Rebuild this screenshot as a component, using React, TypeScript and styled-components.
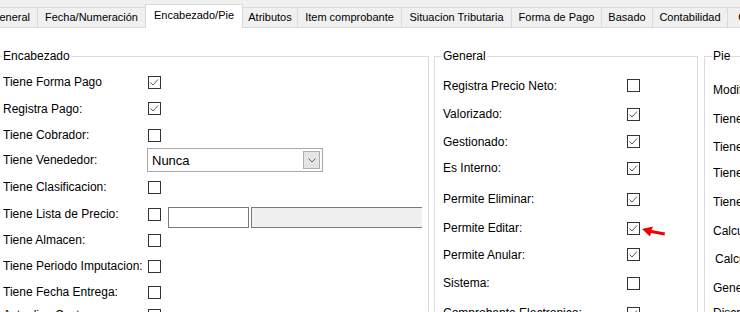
import React from "react";
import styled, { createGlobalStyle } from "styled-components";

const Global = createGlobalStyle`
  html, body { margin: 0; padding: 0; overflow: hidden; background: #fff; }
  body { font-family: "Liberation Sans", Arial, sans-serif; color: #000; }
`;

const Window = styled.div`
  width: 740px;
  height: 312px;
  overflow: hidden;
  background: #fff;
`;

const TabStrip = styled.div`
  height: 28px;
  background: #f0f0f0;
  overflow: hidden;
`;

const TabList = styled.div`
  display: flex;
  align-items: flex-end;
  height: 28px;
  margin-left: -16px;
`;

const Tab = styled.div<{ $w: number; $active?: boolean }>`
  flex: none;
  box-sizing: border-box;
  width: ${(p) => p.$w}px;
  height: ${(p) => (p.$active ? 24 : 21)}px;
  margin-left: -1px;
  border: 1px solid #d9d9d9;
  border-bottom: ${(p) => (p.$active ? "none" : "1px solid #d9d9d9")};
  background: ${(p) => (p.$active ? "#fff" : "#f0f0f0")};
  position: relative;
  z-index: ${(p) => (p.$active ? 1 : 0)};
  font-size: 11px;
  line-height: ${(p) => (p.$active ? 21 : 19)}px;
  text-align: center;
  white-space: nowrap;
  color: #000;
`;

const Content = styled.div`
  display: flex;
  align-items: flex-start;
  padding-top: 21px;
`;

const Group = styled.fieldset<{ $w: number; $ml: number; $pr: number }>`
  flex: none;
  box-sizing: border-box;
  width: ${(p) => p.$w}px;
  height: 330px;
  margin: 0 0 0 ${(p) => p.$ml}px;
  padding: 0 ${(p) => p.$pr}px 0 8px;
  border: 1px solid #dcdcdc;
  min-width: 0;
`;

const Legend = styled.legend`
  margin-left: -1px;
  padding: 0 1px;
  font-size: 12px;
  line-height: 14px;
  color: #000;
`;

const RowList = styled.div`
  display: flex;
  flex-direction: column;
  overflow: hidden;
  height: 280px;
`;

const Row = styled.div<{ $mt: number }>`
  display: flex;
  align-items: center;
  height: 14px;
  flex: none;
  margin-top: ${(p) => p.$mt}px;
`;

const Label = styled.span<{ $w: number; $indent?: number }>`
  flex: none;
  width: ${(p) => p.$w}px;
  padding-left: ${(p) => p.$indent ?? 0}px;
  box-sizing: border-box;
  font-size: 12px;
  line-height: 14px;
  white-space: nowrap;
  color: #000;
`;

const Box = styled.span`
  flex: none;
  box-sizing: border-box;
  width: 13px;
  height: 13px;
  border: 1px solid #333;
  background: #fff;
  display: flex;
`;

const Combo = styled.div`
  flex: none;
  box-sizing: border-box;
  width: 176px;
  height: 24px;
  margin-left: -1px;
  border: 1px solid #a8a8a8;
  background: #fff;
  display: flex;
  align-items: stretch;
  padding: 2px 2px 2px 4px;
`;

const ComboText = styled.span`
  flex: 1;
  font-size: 13px;
  line-height: 19px;
  color: #000;
`;

const ComboButton = styled.span`
  flex: none;
  box-sizing: border-box;
  width: 17px;
  border: 1px solid #adadad;
  background: #e5e5e5;
  display: flex;
  align-items: center;
  justify-content: center;
`;

const TextBox = styled.div<{ $w: number; $ml: number; $disabled?: boolean }>`
  flex: none;
  align-self: flex-start;
  box-sizing: border-box;
  width: ${(p) => p.$w}px;
  height: 21px;
  margin-left: ${(p) => p.$ml}px;
  border: 1px solid #7a7a7a;
  background: ${(p) => (p.$disabled ? "#f0f0f0" : "#fff")};
`;

const Arrow = styled.svg`
  flex: none;
  margin-left: 2px;
  margin-top: 7px;
`;

const Check = ({ on }: { on?: boolean }) => (
  <Box>
    {on && (
      <svg width="11" height="11" viewBox="0 0 11 11">
        <polyline points="1.5,5.5 4,8 9,2.5" fill="none" stroke="#5a5a5a" strokeWidth="1" />
      </svg>
    )}
  </Box>
);

const tabs = [
  { label: "General", w: 55 },
  { label: "Fecha/Numeración", w: 109 },
  { label: "Encabezado/Pie", w: 98, active: true },
  { label: "Atributos", w: 56 },
  { label: "Item comprobante", w: 105 },
  { label: "Situacion Tributaria", w: 111 },
  { label: "Forma de Pago", w: 91 },
  { label: "Basado", w: 52 },
  { label: "Contabilidad", w: 76 },
  { label: "Circuito", w: 60 },
];

const encabezado: { label: string; mt: number; on?: boolean; kind?: string }[] = [
  { label: "Tiene Forma Pago", mt: 12, on: true },
  { label: "Registra Pago:", mt: 12.5, on: true },
  { label: "Tiene Cobrador:", mt: 12.5 },
  { label: "Tiene Venededor:", mt: 11, kind: "combo" },
  { label: "Tiene Clasificacion:", mt: 13 },
  { label: "Tiene Lista de Precio:", mt: 13, kind: "lista" },
  { label: "Tiene Almacen:", mt: 12 },
  { label: "Tiene Periodo Imputacion:", mt: 12 },
  { label: "Tiene Fecha Entrega:", mt: 12 },
  { label: "Actualiza Costo:", mt: 9 },
];

const general: { label: string; mt: number; on?: boolean; arrow?: boolean }[] = [
  { label: "Registra Precio Neto:", mt: 15.5 },
  { label: "Valorizado:", mt: 14.5, on: true },
  { label: "Gestionado:", mt: 13.5, on: true },
  { label: "Es Interno:", mt: 12.5, on: true },
  { label: "Permite Eliminar:", mt: 17, on: true },
  { label: "Permite Editar:", mt: 15, on: true, arrow: true },
  { label: "Permite Anular:", mt: 12.5, on: true },
  { label: "Sistema:", mt: 14.5 },
  { label: "Comprobante Electronico:", mt: 16, on: true },
];

const pie: { label: string; mt: number; indent?: number }[] = [
  { label: "Modifica Precio:", mt: 20 },
  { label: "Tiene Bonificacion:", mt: 15 },
  { label: "Tiene Recargo:", mt: 14 },
  { label: "Tiene Percepciones:", mt: 12 },
  { label: "Tiene Retenciones:", mt: 15 },
  { label: "Calcula Impuestos:", mt: 15 },
  { label: "Calcula Totales:", mt: 14, indent: 2 },
  { label: "Genera Asiento:", mt: 15 },
  { label: "Discrimina IVA:", mt: 11 },
];

export default function App() {
  return (
    <Window>
      <Global />
      <TabStrip>
        <TabList>
          {tabs.map((t) => (
            <Tab key={t.label} $w={t.w} $active={t.active}>
              {t.label}
            </Tab>
          ))}
        </TabList>
      </TabStrip>
      <Content>
        <Group $w={435} $ml={-6} $pr={6}>
          <Legend>Encabezado</Legend>
          <RowList>
            {encabezado.map((r) => (
              <Row key={r.label} $mt={r.mt}>
                <Label $w={145}>{r.label}</Label>
                {r.kind === "combo" ? (
                  <Combo>
                    <ComboText>Nunca</ComboText>
                    <ComboButton>
                      <svg width="8" height="5" viewBox="0 0 8 5">
                        <polyline points="0.5,0.5 4,4 7.5,0.5" fill="none" stroke="#606060" strokeWidth="1" />
                      </svg>
                    </ComboButton>
                  </Combo>
                ) : (
                  <Check on={r.on} />
                )}
                {r.kind === "lista" && (
                  <>
                    <TextBox $w={81} $ml={7} />
                    <TextBox $w={220} $ml={2} $disabled />
                  </>
                )}
              </Row>
            ))}
          </RowList>
        </Group>
        <Group $w={264} $ml={5} $pr={8}>
          <Legend>General</Legend>
          <RowList>
            {general.map((r) => (
              <Row key={r.label} $mt={r.mt}>
                <Label $w={184}>{r.label}</Label>
                <Check on={r.on} />
                {r.arrow && (
                  <Arrow width="24" height="12" viewBox="0 0 24 12">
                    <polygon points="0,3 11,0.5 9.5,4 23,6.5 22.5,9.5 9,7 8,10.5" fill="#f00000" />
                  </Arrow>
                )}
              </Row>
            ))}
          </RowList>
        </Group>
        <Group $w={300} $ml={6} $pr={8}>
          <Legend>Pie</Legend>
          <RowList>
            {pie.map((r) => (
              <Row key={r.label} $mt={r.mt}>
                <Label $w={180} $indent={r.indent}>
                  {r.label}
                </Label>
              </Row>
            ))}
          </RowList>
        </Group>
      </Content>
    </Window>
  );
}
